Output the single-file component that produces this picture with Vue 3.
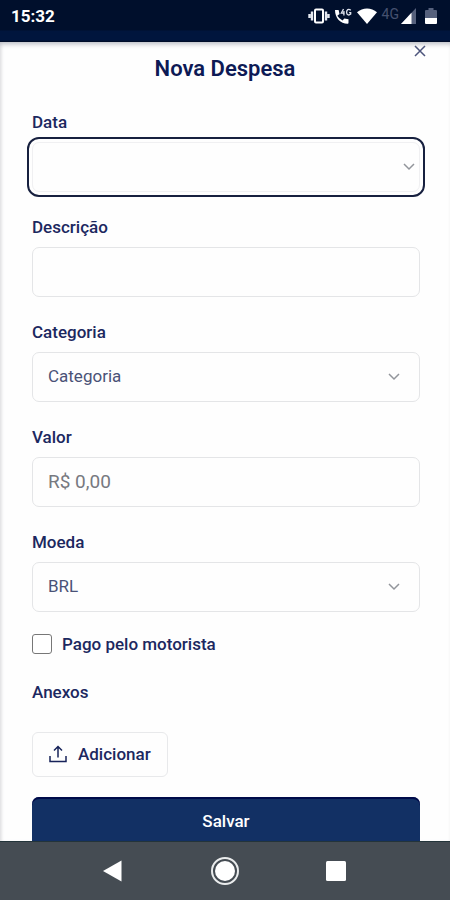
<script setup>
import { reactive } from 'vue'

const expense = reactive({
  date: '',
  description: '',
  category: '',
  amount: '',
  currency: 'BRL',
  paidByDriver: false,
})
</script>

<template>
  <div class="screen">
    <header class="status">
      <time class="clock">15:32</time>
      <div class="indicators">
        <svg class="vibrate" viewBox="0 0 22 16" aria-hidden="true">
          <rect x="7" y="1.5" width="8" height="13" rx="1" fill="none" stroke="#fff" stroke-width="2" />
          <path d="M4 3.5v9M18 3.5v9M1.500 6v4M20.500 6v4" fill="none" stroke="#e4e8f0" stroke-width="2.400" />
        </svg>
        <svg class="call" viewBox="0 0 18 18" aria-hidden="true">
          <path d="M1 3h3.600l.9 4-2.200 1.800a12 12 0 0 0 5.200 4.700l1.900-2.100 4.100.9v3.500c0 .6-.4 1-1 1C6.500 16.800 1 11 1 3z" fill="#fff" />
          <path d="M9.500 2 7.300 6.200h3.400M9.900 4v4.600M16.800 3.200c-2.400-2-4.200-.3-4.200 2s1.900 3.800 4.100 1.900V5.600h-1.600" fill="none" stroke="#dfe4ee" stroke-width="1.300" />
        </svg>
        <svg class="wifi" viewBox="0 0 20 16" aria-hidden="true">
          <path d="M0 4.200C5.500-.9 14.500-.9 20 4.200L10 16z" fill="#fff" />
        </svg>
        <span class="network">4G</span>
        <svg class="signal" viewBox="0 0 15 16" aria-hidden="true">
          <path d="M15 0v16H0z" fill="#56617d" />
          <path d="M10.500 4.800V16H0z" fill="#fff" />
        </svg>
        <svg class="battery" viewBox="0 0 12 16" aria-hidden="true">
          <path d="M3.500 0h5v2H11q1 0 1 1v7H0V3q0-1 1-1h2.500z" fill="#56617d" />
          <path d="M0 10h12v5q0 1-1 1H1q-1 0-1-1z" fill="#fff" />
        </svg>
      </div>
    </header>

    <main class="sheet">
      <div class="heading">
        <h1>Nova Despesa</h1>
        <button class="close" type="button" aria-label="Fechar">
          <svg viewBox="0 0 12 12" aria-hidden="true"><path d="M1 1l10 10M11 1 1 11" /></svg>
        </button>
      </div>

      <form @submit.prevent>
        <div class="field">
          <label for="date">Data</label>
          <div class="control focused">
            <select id="date" v-model="expense.date"><option value=""></option></select>
            <svg class="chevron" viewBox="0 0 12 8" aria-hidden="true"><path d="m1 1 5 5 5-5" /></svg>
          </div>
        </div>
        <div class="field">
          <label for="description">Descrição</label>
          <div class="control"><input id="description" v-model="expense.description" type="text" /></div>
        </div>
        <div class="field">
          <label for="category">Categoria</label>
          <div class="control">
            <select id="category" v-model="expense.category"><option value="">Categoria</option></select>
            <svg class="chevron" viewBox="0 0 12 8" aria-hidden="true"><path d="m1 1 5 5 5-5" /></svg>
          </div>
        </div>
        <div class="field">
          <label for="amount">Valor</label>
          <div class="control">
            <input id="amount" v-model="expense.amount" class="amount" type="text" inputmode="decimal" placeholder="R$ 0,00" />
          </div>
        </div>
        <div class="field">
          <label for="currency">Moeda</label>
          <div class="control">
            <select id="currency" v-model="expense.currency"><option>BRL</option></select>
            <svg class="chevron" viewBox="0 0 12 8" aria-hidden="true"><path d="m1 1 5 5 5-5" /></svg>
          </div>
        </div>

        <label class="check">
          <input v-model="expense.paidByDriver" type="checkbox" />
          Pago pelo motorista
        </label>

        <h2>Anexos</h2>
        <button class="add" type="button">
          <svg viewBox="0 0 18 18" aria-hidden="true">
            <path d="M1 11v5.500h16V11M9 12.500V2M5 5.500l4-4 4 4" />
          </svg>
          Adicionar
        </button>
        <button class="save" type="submit">Salvar</button>
      </form>
    </main>

    <nav class="system">
      <button type="button" aria-label="Voltar">
        <svg viewBox="0 0 30 30" aria-hidden="true"><path d="M4 15 22.500 4.500v21z" fill="#fff" /></svg>
      </button>
      <button type="button" aria-label="Início">
        <svg viewBox="0 0 30 30" aria-hidden="true">
          <circle cx="15" cy="15" r="13" fill="none" stroke="#e9ebec" stroke-width="2" />
          <circle cx="15" cy="15" r="10" fill="#fff" />
        </svg>
      </button>
      <button type="button" aria-label="Recentes">
        <svg viewBox="0 0 30 30" aria-hidden="true"><rect x="5" y="5" width="20" height="20" rx="1.500" fill="#fff" /></svg>
      </button>
    </nav>
  </div>
</template>

<style>
body {
  margin: 0;
}
</style>

<style scoped>
.screen {
  display: flex;
  flex-direction: column;
  height: 100vh;
  background: #fefefe;
  color: #1c2860;
  font-family: Roboto, "Liberation Sans", sans-serif;
  font-size: 17px;
  line-height: 20px;
}

*,
*::before {
  box-sizing: border-box;
}

button,
input,
select {
  margin: 0;
  font: inherit;
  color: inherit;
}

svg {
  display: block;
  flex: none;
}

.status {
  display: flex;
  flex: none;
  align-items: flex-start;
  justify-content: space-between;
  height: 42px;
  padding: 6px 13px 0 11px;
  background: linear-gradient(#000f2c 0 30px, #00153d 31px 40px, #000a24);
  color: #fff;
}

.clock {
  font-size: 17px;
  font-weight: 700;
}

.indicators {
  display: flex;
  align-items: center;
  height: 20px;
}

.vibrate {
  width: 22px;
  height: 16px;
  margin-right: 4px;
}

.call {
  width: 18px;
  height: 18px;
  margin-right: 5px;
}

.wifi {
  width: 20px;
  height: 16px;
  margin-right: 5px;
}

.network {
  margin-right: 2px;
  color: #46516f;
  font-size: 14px;
  line-height: 14px;
  padding-bottom: 4px;
}

.signal {
  width: 15px;
  height: 16px;
  margin-right: 9px;
}

.battery {
  width: 12px;
  height: 16px;
}

.sheet {
  flex: 1;
  min-height: 0;
  overflow-y: auto;
  scrollbar-width: none;
  box-shadow: inset 0 5px 5px -3px #b9bbc2, inset 3px 0 3px -1px #e6e6e8;
}

.heading {
  display: grid;
  grid-template-columns: 1fr auto 1fr;
  padding: 3px 24px 0;
}

h1 {
  grid-column: 2;
  margin: 10px 0 0;
  color: #0d1a55;
  font-size: 22px;
  font-weight: 600;
  line-height: 28px;
}

.close {
  justify-self: end;
  width: 12px;
  height: 12px;
  padding: 0;
  border: 0;
  background: none;
}

.close path {
  fill: none;
  stroke: #4d557c;
  stroke-width: 1.5;
}

form {
  padding: 29px 30px 20px 32px;
}

.field {
  margin-bottom: 25px;
}

.field label {
  display: block;
  margin-bottom: 10px;
  font-weight: 500;
}

.control {
  display: grid;
  align-items: center;
  height: 50px;
  border: 1px solid #e4e5e7;
  border-radius: 7px;
}

.control > * {
  grid-area: 1 / 1;
}

.control input,
.control select {
  width: 100%;
  height: 48px;
  padding: 0 15px 2px;
  border: 0;
  border-radius: 7px;
  outline: 0;
  background: none;
  appearance: none;
  color: #4a5277;
}

.control .amount {
  font-size: 19px;
}

.amount::placeholder {
  color: #777980;
  opacity: 1;
}

.chevron {
  justify-self: end;
  width: 12px;
  height: 8px;
  margin-right: 19px;
  pointer-events: none;
}

.chevron path {
  fill: none;
  stroke: #92959b;
  stroke-width: 1.5;
}

.focused {
  border-color: #f0f0f2;
  outline: 2px solid #17203f;
  outline-offset: 3px;
}

.focused .chevron {
  margin-right: 4px;
}

.check {
  display: flex;
  align-items: center;
  gap: 10px;
  margin-top: -3px;
  font-weight: 500;
}

.check input {
  width: 20px;
  height: 20px;
  border: 1px solid #777;
  border-radius: 3px;
  background: #fff;
  appearance: none;
}

.check input:checked {
  background: #123064;
}

h2 {
  margin: 28px 0 30px;
  font-size: 17px;
  font-weight: 500;
  line-height: 20px;
}

.add {
  display: flex;
  align-items: center;
  gap: 11px;
  height: 45px;
  padding: 0 16px 2px;
  border: 1px solid #e8e9eb;
  border-radius: 6px;
  background: none;
  font-weight: 500;
}

.add svg {
  width: 18px;
  height: 18px;
}

.add path {
  fill: none;
  stroke: #17235a;
  stroke-width: 1.5;
}

.save {
  width: 100%;
  height: 54px;
  margin-top: 20px;
  padding: 0 16px 6px;
  border: 0;
  border-radius: 7px;
  background: #123064;
  box-shadow: inset 0 2px #000b4a;
  color: #fff;
  font-weight: 500;
}

.system {
  display: flex;
  flex: none;
  align-items: center;
  justify-content: center;
  gap: 81px;
  height: 59px;
  border-top: 1px solid #23343a;
  background: #454c53;
}

.system button {
  padding: 0;
  border: 0;
  background: none;
}

.system svg {
  width: 30px;
  height: 30px;
}
</style>
